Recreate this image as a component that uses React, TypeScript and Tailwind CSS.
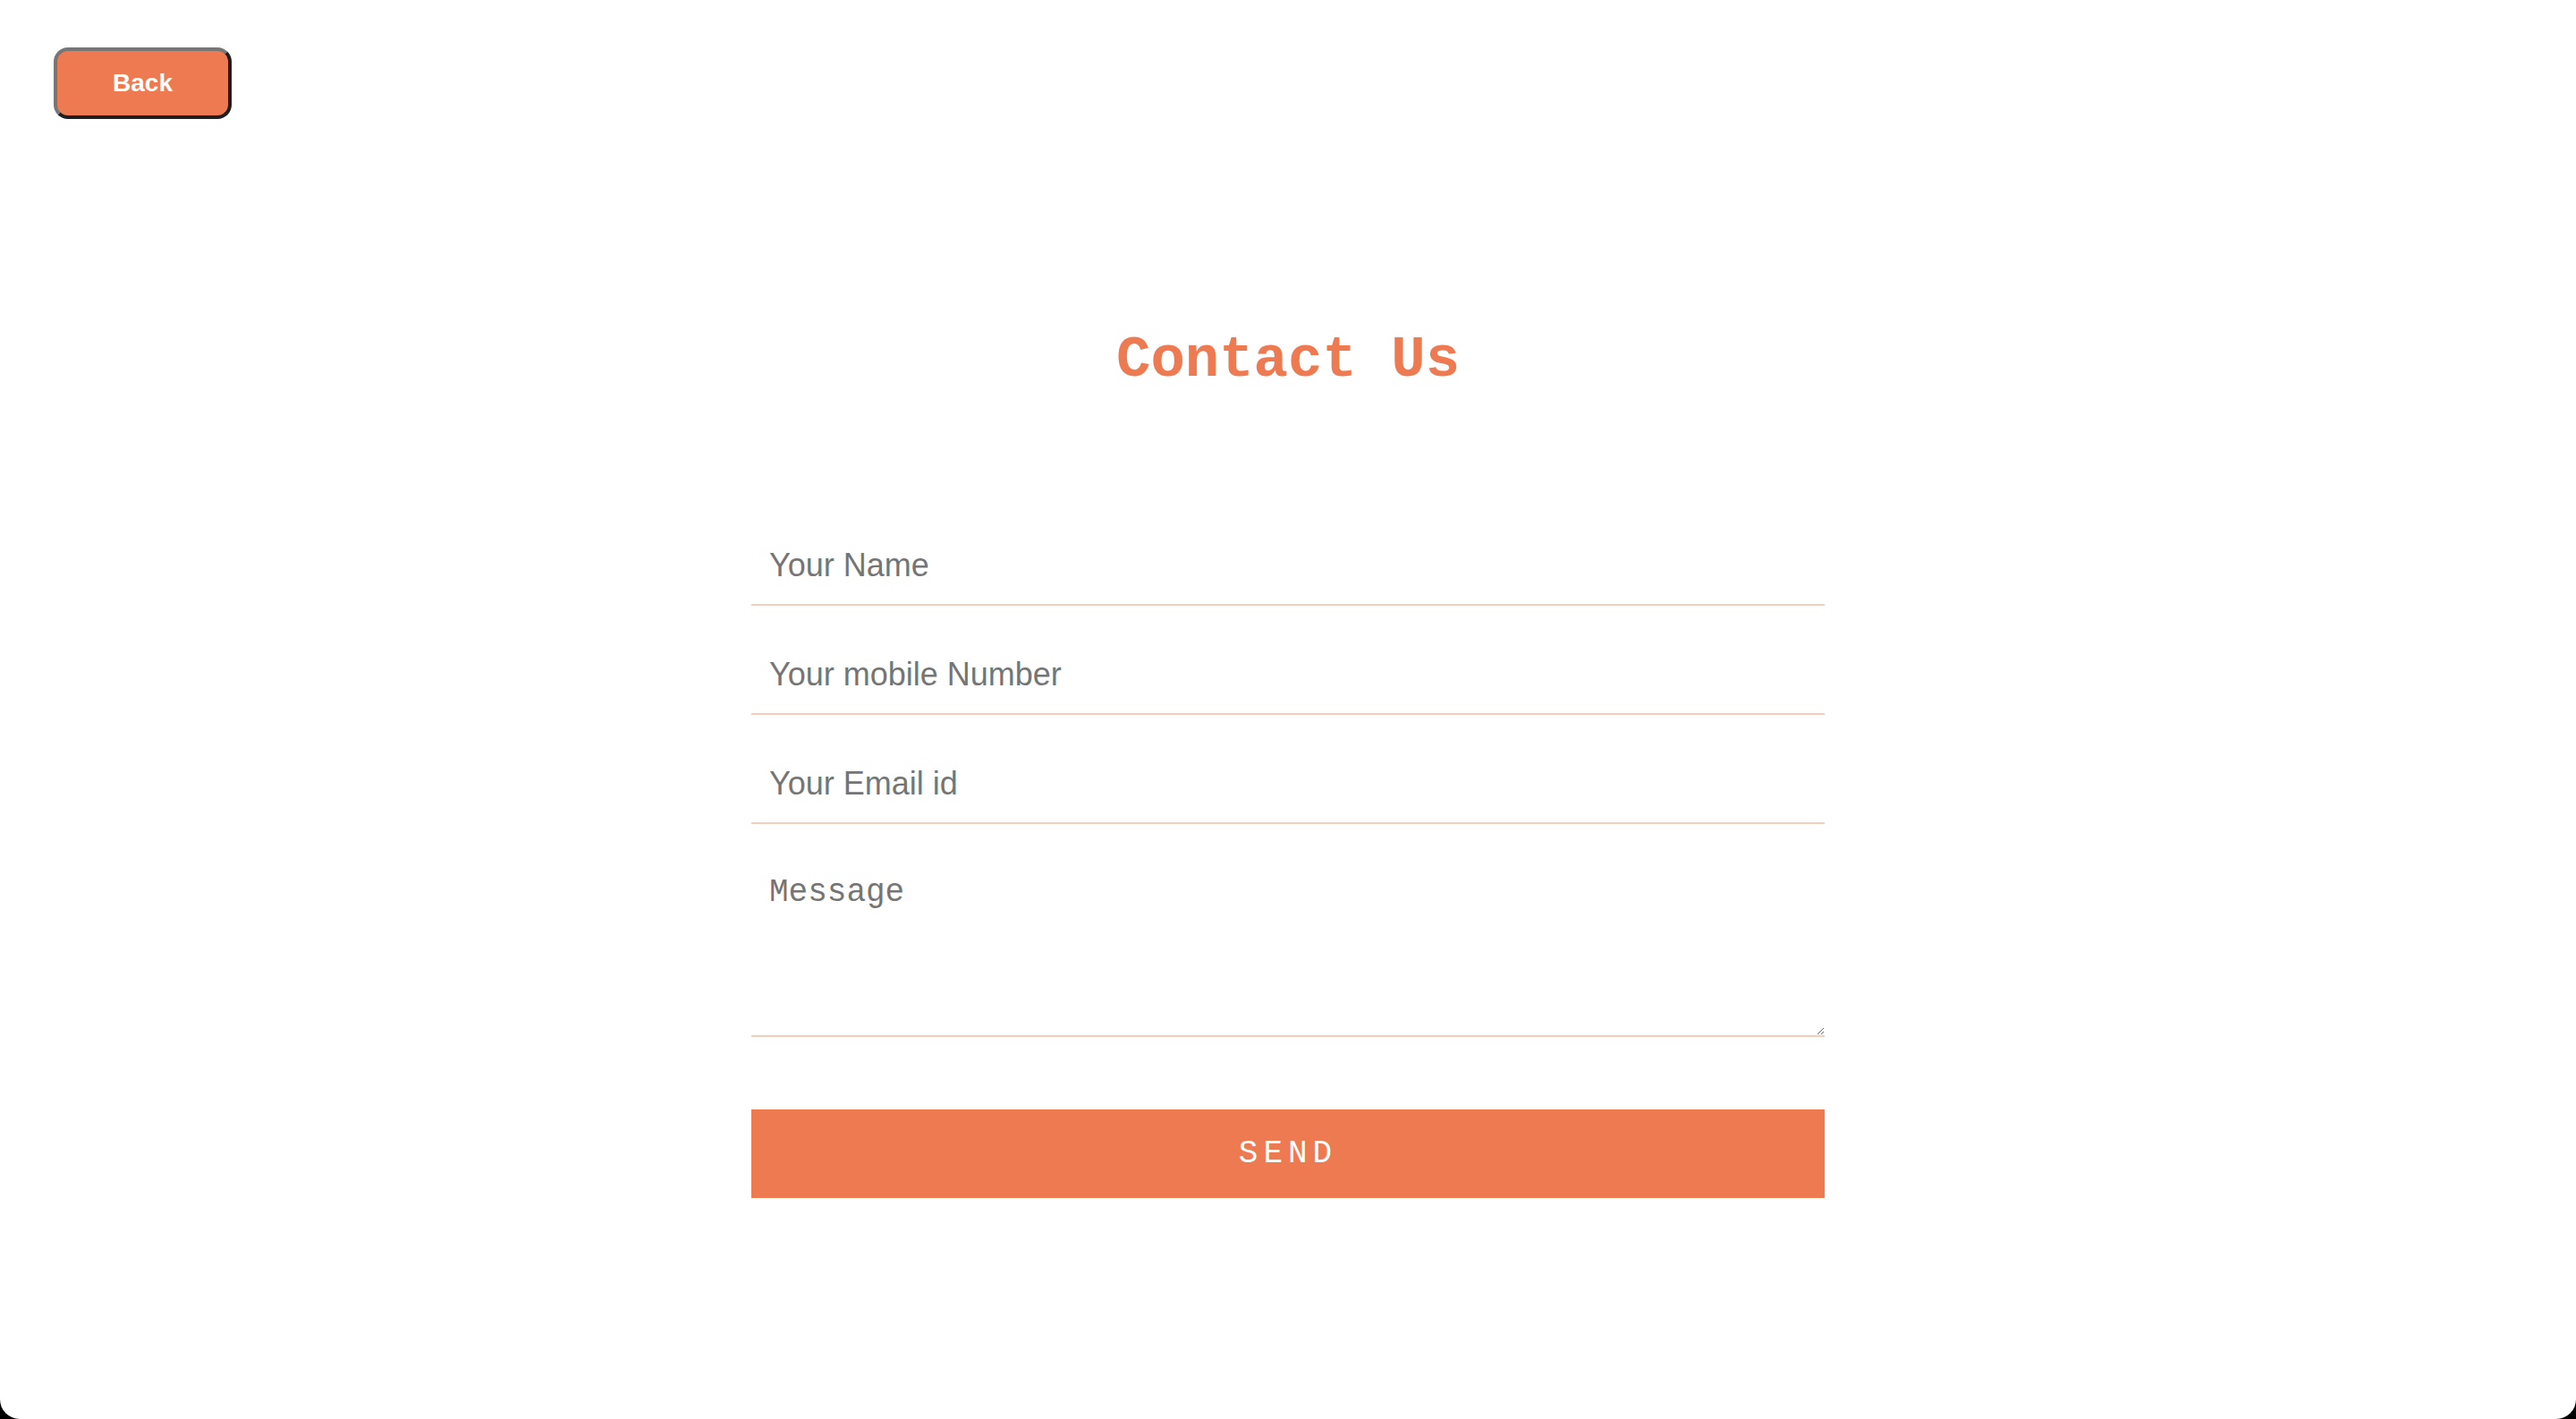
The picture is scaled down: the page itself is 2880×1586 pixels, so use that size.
import React, { useState } from 'react';

const ORANGE = 'bg-[#ee7a52]';

export default function App() {
  const [form, setForm] = useState({ name: '', mobile: '', email: '', message: '' });

  const field = (key: keyof typeof form, value: string) =>
    setForm(prev => ({ ...prev, [key]: value }));

  return (
    <div className="bg-black min-h-[1586px]">
      <div className="bg-white h-[1586px] rounded-b-[22px] flex flex-col">
        <div className="pl-[60px] pt-[53px]">
          <button
            type="button"
            className={`${ORANGE} w-[199px] h-[80px] rounded-[16px] border-[4px] border-t-[#767676] border-l-[#767676] border-r-[#1f1f1f] border-b-[#1f1f1f] text-white font-bold text-[28px] font-['Liberation_Sans',Arial,sans-serif]`}
          >
            Back
          </button>
        </div>

        <h1 className="mt-[234px] text-center text-[64px] leading-[72px] font-bold text-[#ee7a52] font-['Liberation_Mono','Courier_New',monospace]">
          Contact Us
        </h1>

        <form
          onSubmit={e => e.preventDefault()}
          className="mt-[116px] mx-auto w-[1200px] flex flex-col"
        >
          <input
            value={form.name}
            onChange={e => field('name', e.target.value)}
            placeholder="Your Name"
            className={inputCls}
          />
          <input
            value={form.mobile}
            onChange={e => field('mobile', e.target.value)}
            placeholder="Your mobile Number"
            className={inputCls}
          />
          <input
            value={form.email}
            onChange={e => field('email', e.target.value)}
            placeholder="Your Email id"
            className={inputCls}
          />
          <textarea
            value={form.message}
            onChange={e => field('message', e.target.value)}
            placeholder="Message"
            className="box-border h-[238px] w-full pt-[57px] pb-[10px] px-[20px] text-[36px] leading-[40px] text-[#333] placeholder:text-[#757575] border-b-2 border-[#f6ccba] outline-none resize-y font-['Liberation_Mono','Courier_New',monospace]"
          />
          <button
            type="submit"
            className={`${ORANGE} mt-[81px] h-[99px] w-full flex items-center justify-center text-white text-[36px] tracking-[6px] font-['Liberation_Mono','Courier_New',monospace]`}
          >
            SEND
          </button>
        </form>
      </div>
    </div>
  );
}

const inputCls =
  "box-border w-full pt-[57px] pb-[23px] px-[20px] text-[36px] leading-[40px] text-[#333] placeholder:text-[#757575] border-b-2 border-[#f6ccba] outline-none font-['Liberation_Sans',Arial,sans-serif]";
